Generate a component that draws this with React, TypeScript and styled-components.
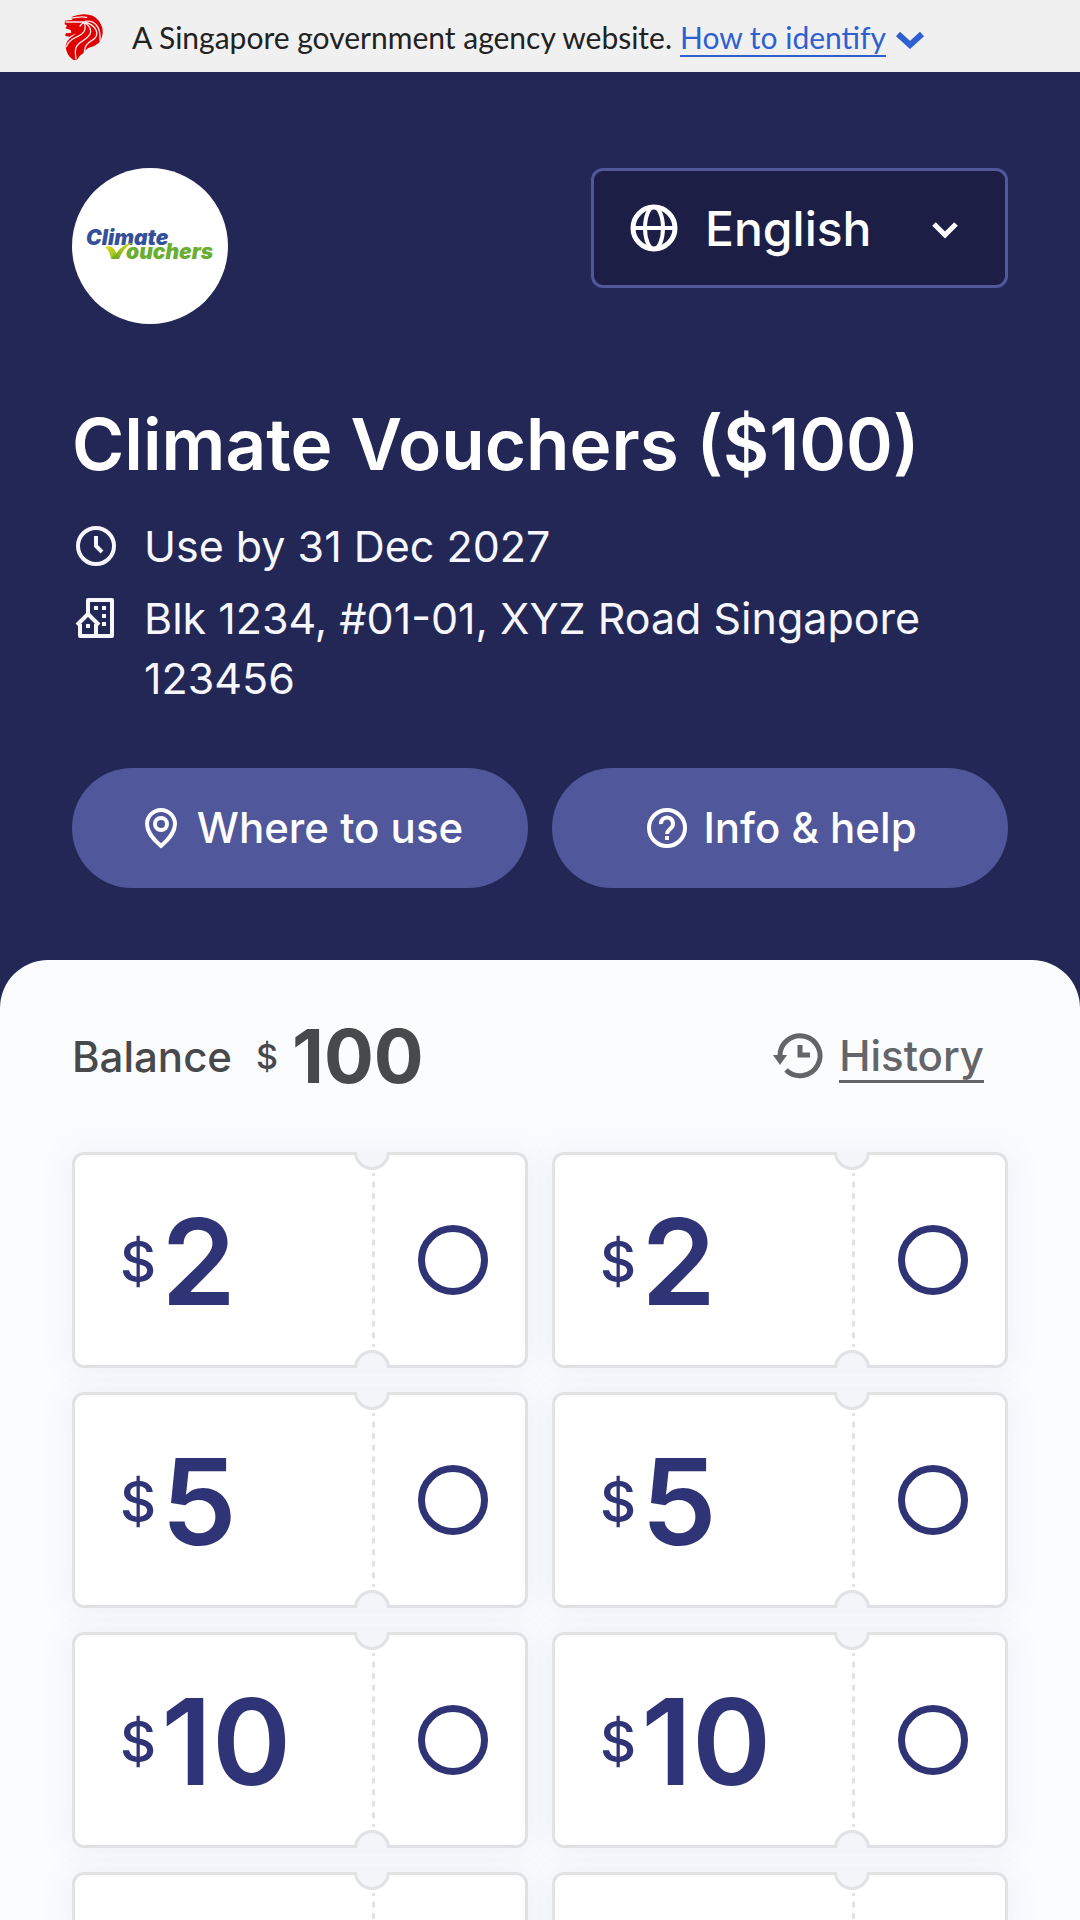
import React from 'react';
import styled, { createGlobalStyle } from 'styled-components';

const Global = createGlobalStyle`
  *, *::before, *::after { box-sizing: border-box; }
  body {
    margin: 0;
    background: #fbfcfe;
    font-family: Inter, "Liberation Sans", sans-serif;
  }
  button, select, input { font: inherit; margin: 0; }
  svg { display: block; flex: none; }
`;

const Banner = styled.div`
  display: flex;
  align-items: center;
  min-height: 72px;
  padding: 2px 58px 0;
  background: #f0f0f0;
  color: #222;
  font: 400 30px/36px Lato, "Open Sans", sans-serif;
`;
const BannerText = styled.p`
  margin: 0 8px 0 24px;
`;
const IdentifyLink = styled.a`
  display: flex;
  align-items: center;
  gap: 8px;
  color: #2f60d0;
  text-decoration: none;
  span { box-shadow: 0 2px 0 currentColor; }
  svg { margin-top: 4px; }
`;

const Header = styled.header`
  padding: 96px 72px 120px;
  background: #232755;
  color: #fff;
`;
const TopRow = styled.div`
  display: flex;
  justify-content: space-between;
  align-items: flex-start;
`;
const LogoDisc = styled.div`
  width: 156px;
  height: 156px;
  border-radius: 50%;
  background: #fff;
`;
const Language = styled.div`
  position: relative;
  width: 417px;
`;
const LanguageSelect = styled.select`
  appearance: none;
  display: block;
  width: 100%;
  height: 120px;
  padding: 0 111px;
  border: 3px solid #50579a;
  border-radius: 12px;
  background: #1c1e45;
  color: #fff;
  font-size: 48px;
  font-weight: 500;
`;
const GlobeSlot = styled.span`
  position: absolute;
  left: 36px;
  top: 33px;
  pointer-events: none;
`;
const ChevronSlot = styled.span`
  position: absolute;
  right: 39px;
  top: 37px;
  pointer-events: none;
`;
const Title = styled.h1`
  margin: 72px 0 0;
  font-size: 71px;
  line-height: 96px;
  font-weight: 600;
`;
const Facts = styled.ul`
  display: grid;
  gap: 12px;
  margin: 24px 0 0;
  padding: 0;
  list-style: none;
`;
const Fact = styled.li`
  display: flex;
  gap: 24px;
  color: #f6f7fd;
  font-size: 43px;
  line-height: 60px;
  svg { margin-top: 6px; }
`;
const Actions = styled.div`
  display: grid;
  grid-template-columns: 1fr 1fr;
  gap: 24px;
  margin-top: 60px;
`;
const Action = styled.button`
  display: flex;
  align-items: center;
  justify-content: center;
  gap: 12px;
  height: 120px;
  border: 0;
  border-radius: 60px;
  background: #50579a;
  color: #fff;
  font-size: 42px;
  line-height: 48px;
  font-weight: 500;
`;

const Sheet = styled.main`
  margin-top: -48px;
  padding: 48px 72px;
  border-radius: 48px 48px 0 0;
  background: #fbfcfe;
`;
const Summary = styled.div`
  display: flex;
  align-items: center;
  justify-content: space-between;
  height: 96px;
  padding-right: 24px;
`;
const Balance = styled.p`
  display: flex;
  align-items: center;
  margin: 0;
  color: #48494b;
  font-size: 42px;
  font-weight: 500;
`;
const BalanceSign = styled.span`
  margin: 0 14px 0 24px;
  font-size: 34px;
`;
const BalanceAmount = styled.strong`
  font-size: 74px;
  font-weight: 700;
`;
const History = styled.a`
  display: flex;
  align-items: center;
  gap: 12px;
  color: #646569;
  font-size: 42px;
  line-height: 48px;
  font-weight: 500;
  text-decoration: none;
  span { box-shadow: 0 3px 0 currentColor; }
`;

const Vouchers = styled.div`
  display: grid;
  grid-template-columns: 1fr 1fr;
  gap: 24px;
  margin-top: 48px;
`;
const Ticket = styled.label`
  display: flex;
  position: relative;
  height: 216px;
  border: 3px solid #e1e2e4;
  border-radius: 12px;
  background: #fff;
  box-shadow: 0 0 36px rgba(70, 90, 160, 0.08);
  color: #2e3476;
`;
const Notch = styled.span<{ $edge: 'top' | 'bottom' }>`
  position: absolute;
  right: 135px;
  ${p => p.$edge}: -3px;
  width: 36px;
  height: 18px;
  border: 3px solid #e1e2e4;
  border-${p => p.$edge}: 0;
  border-radius: ${p => (p.$edge === 'top' ? '0 0 18px 18px' : '18px 18px 0 0')};
  background: #f4f5f9;
`;
const Value = styled.span`
  display: flex;
  flex: 1;
  align-items: center;
  gap: 5px;
  padding: 4px 0 0 45px;
`;
const Sign = styled.span`
  font-size: 56px;
  font-weight: 500;
`;
const Amount = styled.span`
  font-size: 120px;
  line-height: 112px;
  font-weight: 600;
`;
const Tear = styled.span`
  width: 3px;
  margin: 18px 0;
  background: linear-gradient(#e1e2e4 25%, transparent 25% 75%, #e1e2e4 75%) 0 0 / 3px 12px round;
`;
const Stub = styled.span`
  display: flex;
  align-items: center;
  justify-content: center;
  width: 150px;
  padding-left: 6px;
`;
const Tick = styled.input`
  appearance: none;
  width: 70px;
  height: 70px;
  border: 7px solid #2e3476;
  border-radius: 50%;
  &:checked { background: #2e3476; }
`;

const Lion = () => (
  <svg width="50" height="54" viewBox="0 0 150 162" aria-hidden="true">
    <path fill="#e00000" d="M21 32L44 29 38 22Q48 17 60 15 82 9 104 17 126 29 133 54 138 80 122 99 110 110 91 114 80 121 76 129 64 137 59 147 54 151 45 149 24 135 23 108 26 90 42 80L54 70 42 76 35 80 22 78 23 70 40 68 38 60 22 55 27 47 20 42z" />
    <g fill="none" stroke="#f8e8e8" strokeWidth="4" strokeLinecap="round">
      <path d="M38 23C52 26 62 17 86 22M24 36H76M66 48L78 35M78 36C88 62 75 73 52 83 36 90 30 98 25 110M78 36C108 56 103 76 72 94 50 108 50 120 54 146M78 36C116 44 129 76 102 91 84 101 82 109 79 124M82 34C110 30 129 50 126 92" />
    </g>
  </svg>
);

const Logo = () => (
  <svg width="156" height="156" viewBox="0 0 156 156" role="img" aria-label="Climate Vouchers">
    <defs>
      <linearGradient id="tickLeft" x1="0" y1="0" x2="1" y2="1"><stop stopColor="#e6dc10" /><stop offset="1" stopColor="#7dba26" /></linearGradient>
      <linearGradient id="tickRight" x1="0" y1="1" x2="1" y2="0"><stop stopColor="#5fa52c" /><stop offset="1" stopColor="#e6e010" /></linearGradient>
    </defs>
    <g fontFamily="Inter, sans-serif" fontWeight="900" fontStyle="italic" fontSize="21">
      <text x="14" y="77" fill="#34509a">Climate</text>
      <text x="54" y="91" fill="#69ad31">ouchers</text>
    </g>
    <path fill="url(#tickLeft)" d="M33 79q6-2 9 2l4 7-3 3h-4q-1-8-6-12z" />
    <path fill="url(#tickRight)" d="M43 87c5-7 10-12 18-12-7 3-11 9-14 16h-7q1-3 3-4z" />
  </svg>
);

const Globe = () => (
  <svg width="54" height="54" viewBox="0 0 54 54" fill="none" stroke="#fff" strokeWidth="4" aria-hidden="true">
    <circle cx="27" cy="27" r="21" strokeWidth="5" /><path d="M6 27h42" /><ellipse cx="27" cy="27" rx="9" ry="21" />
  </svg>
);
const Clock = () => (
  <svg width="48" height="48" viewBox="0 0 24 24" fill="none" stroke="currentColor" strokeWidth="2" aria-hidden="true">
    <circle cx="12" cy="12" r="9" /><path d="M12 7v5l3 3" />
  </svg>
);
const Building = () => (
  <svg width="48" height="48" viewBox="0 0 24 24" fill="none" stroke="currentColor" strokeWidth="2" strokeLinejoin="round" aria-hidden="true">
    <path d="M8 11V3h12v18H4v-6M12 15v6M2.500 15.500L8 10l5.500 5.500" />
    <path d="M11 7h2M15 7h2M15 11h2M15 15h2M7 16h2" />
  </svg>
);
const Pin = () => (
  <svg width="48" height="48" viewBox="0 0 24 24" fill="none" stroke="currentColor" strokeWidth="2" aria-hidden="true">
    <path d="M12 21c-3-2.500-7-7-7-11a7 7 0 0 1 14 0c0 4-4 8.500-7 11z" /><circle cx="12" cy="10" r="3" />
  </svg>
);
const Help = () => (
  <svg width="48" height="48" viewBox="0 0 24 24" fill="none" stroke="currentColor" strokeWidth="2" aria-hidden="true">
    <circle cx="12" cy="12" r="9" /><path d="M9 10a3 3 0 1 1 5 2c-1 1-2 1.500-2 3M12 16v2" />
  </svg>
);
const HistoryIcon = () => (
  <svg width="60" height="60" viewBox="0 0 60 60" fill="none" stroke="currentColor" strokeWidth="5" aria-hidden="true">
    <path d="M13 30a20 20 0 1 1 6 14" /><path d="M33 19v10h10" />
    <path d="M6 29h14l-7 10z" fill="currentColor" stroke="none" />
  </svg>
);
const Chevron = () => (
  <svg width="48" height="48" viewBox="0 0 48 48" fill="none" stroke="#fff" strokeWidth="5" aria-hidden="true">
    <path d="M13 19L24 30 35 19" />
  </svg>
);
const BoldChevron = () => (
  <svg width="32" height="32" viewBox="0 0 32 32" fill="none" stroke="currentColor" strokeWidth="6" aria-hidden="true">
    <path d="M4 11L16 22 28 11" />
  </svg>
);

const amounts = [2, 2, 5, 5, 10, 10, 10, 10];

export default function App() {
  return (
    <>
      <Global />
      <Banner>
        <Lion />
        <BannerText>A Singapore government agency website.</BannerText>
        <IdentifyLink href="#identify"><span>How to identify</span><BoldChevron /></IdentifyLink>
      </Banner>
      <Header>
        <TopRow>
          <LogoDisc><Logo /></LogoDisc>
          <Language>
            <LanguageSelect aria-label="Language"><option>English</option></LanguageSelect>
            <GlobeSlot><Globe /></GlobeSlot>
            <ChevronSlot><Chevron /></ChevronSlot>
          </Language>
        </TopRow>
        <Title>Climate Vouchers ($100)</Title>
        <Facts>
          <Fact><Clock />Use by 31 Dec 2027</Fact>
          <Fact><Building />Blk 1234, #01-01, XYZ Road Singapore 123456</Fact>
        </Facts>
        <Actions>
          <Action type="button"><Pin />Where to use</Action>
          <Action type="button"><Help />Info &amp; help</Action>
        </Actions>
      </Header>
      <Sheet>
        <Summary>
          <Balance>Balance<BalanceSign>$</BalanceSign><BalanceAmount>100</BalanceAmount></Balance>
          <History href="#history"><HistoryIcon /><span>History</span></History>
        </Summary>
        <Vouchers>
          {amounts.map((amount, i) => (
            <Ticket key={i}>
              <Value><Sign>$</Sign><Amount>{amount}</Amount></Value>
              <Tear />
              <Stub><Tick type="checkbox" aria-label={`Select $${amount} voucher`} /></Stub>
              <Notch $edge="top" />
              <Notch $edge="bottom" />
            </Ticket>
          ))}
        </Vouchers>
      </Sheet>
    </>
  );
}
